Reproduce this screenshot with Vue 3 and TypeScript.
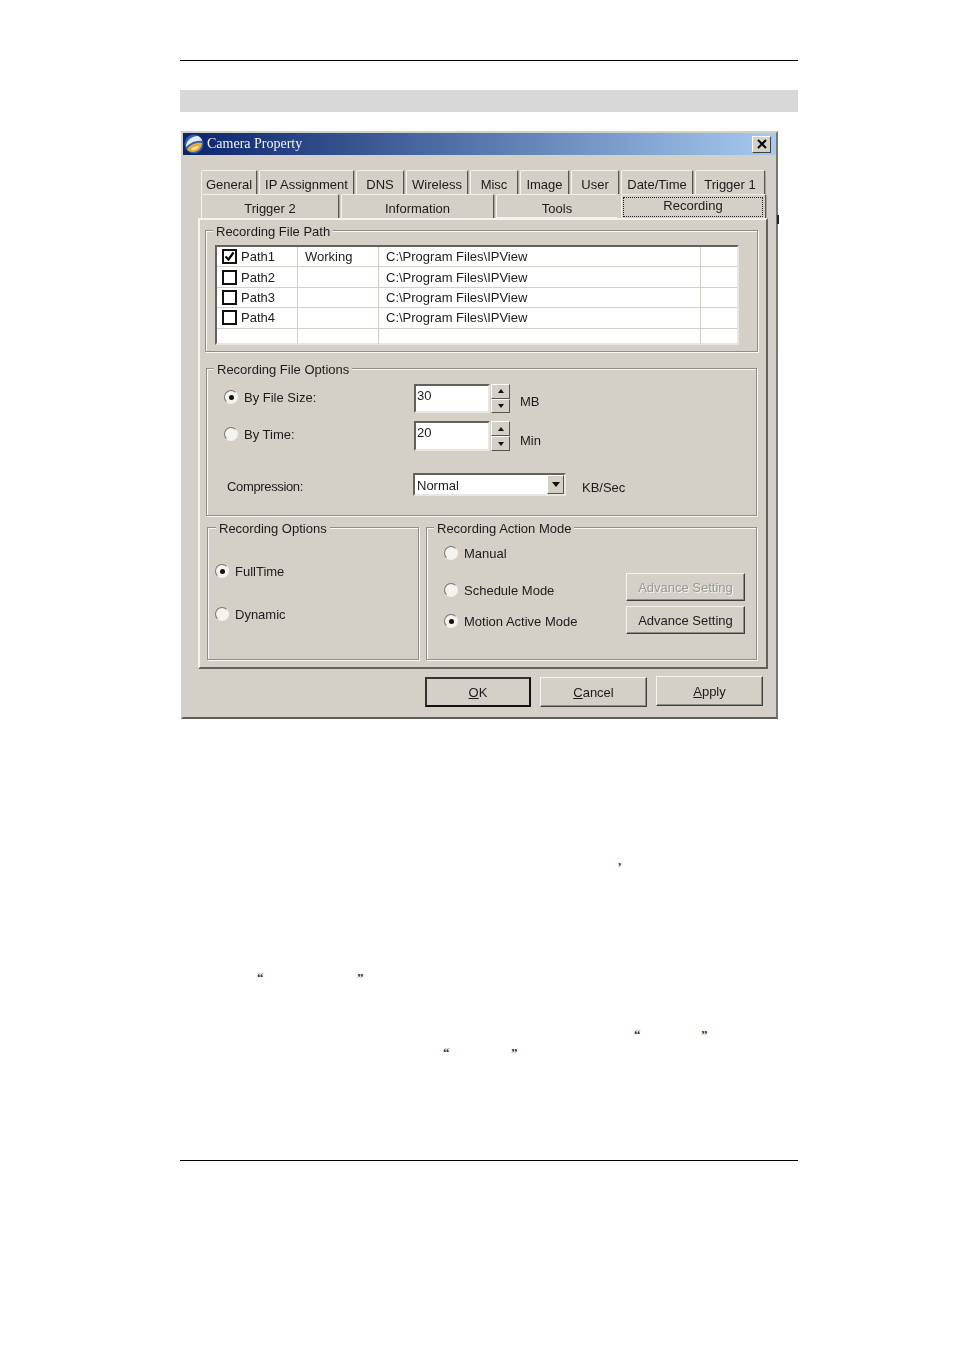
<script setup lang="ts">
const tabsTop = [
  { name: 'General', w: 56 },
  { name: 'IP Assignment', w: 95 },
  { name: 'DNS', w: 48 },
  { name: 'Wireless', w: 62 },
  { name: 'Misc', w: 48 },
  { name: 'Image', w: 49 },
  { name: 'User', w: 48 },
  { name: 'Date/Time', w: 72 },
  { name: 'Trigger 1', w: 70 },
]
const tabsBottom = [
  { name: 'Trigger 2', w: 138 },
  { name: 'Information', w: 153 },
  { name: 'Tools', w: 122 },
]
const paths = [
  { name: 'Path1', on: true, state: 'Working' },
  { name: 'Path2', on: false, state: '' },
  { name: 'Path3', on: false, state: '' },
  { name: 'Path4', on: false, state: '' },
]
// stray punctuation left below the dialog, x is measured from the page rule
const notes = [
  { gap: 130, marks: [{ t: ',', x: 438 }] },
  { gap: 99, marks: [{ t: '“', x: 77 }, { t: '”', x: 177 }] },
  { gap: 39, marks: [{ t: '“', x: 454 }, { t: '”', x: 521 }] },
  { gap: 0, marks: [{ t: '“', x: 263 }, { t: '”', x: 331 }] },
]
</script>

<template>
  <div class="page">
    <div class="rule"></div>
    <div class="shade"></div>

    <div class="dialog">
      <div class="titlebar">
        <svg class="app-icon" width="20" height="20" viewBox="0 0 20 20">
          <circle cx="10" cy="10" r="9.5" fill="#2f5fb0" />
          <path d="M2 13C2 7 7 2 14 2c2 1 4 3 4 5-5-1-11 1-16 6z" fill="#e6ebf2" />
          <path d="M3 15c3-4 9-7 15-6 0 5-4 9-9 9-3 0-5-1-6-3z" fill="#eda93a" />
          <path d="M7 15c2-2 5-3 8-3-1 2-3 4-6 4z" fill="#f8e0b0" />
        </svg>
        <span class="title-text">Camera Property</span>
        <button class="close">
          <svg width="10" height="10" viewBox="0 0 10 10">
            <path d="M1 1l8 8M9 1l-8 8" stroke="#000" stroke-width="2" />
          </svg>
        </button>
      </div>

      <div class="tabs">
        <div class="tab-row">
          <div v-for="t in tabsTop" :key="t.name" class="tab" :style="{ width: t.w + 'px' }">{{ t.name }}</div>
        </div>
        <div class="tab-row">
          <div v-for="t in tabsBottom" :key="t.name" class="tab low" :style="{ width: t.w + 'px' }">{{ t.name }}</div>
          <div class="tab active"><span>Recording</span></div>
        </div>
      </div>

      <div class="panel">
        <section class="group path-group">
          <div class="legend">Recording File Path</div>
          <div class="list">
            <div v-for="p in paths" :key="p.name" class="list-row">
              <div class="cell first">
                <span class="check">
                  <svg v-if="p.on" width="11" height="11" viewBox="0 0 11 11">
                    <path d="M1.5 5.5l3 3 5-7" fill="none" stroke="#000" stroke-width="2.2" />
                  </svg>
                </span>
                <span>{{ p.name }}</span>
              </div>
              <div class="cell">{{ p.state }}</div>
              <div class="cell">C:\Program Files\IPView</div>
              <div class="cell"></div>
            </div>
            <div class="list-row blank">
              <div class="cell first"></div>
              <div class="cell"></div>
              <div class="cell"></div>
              <div class="cell"></div>
            </div>
          </div>
        </section>

        <section class="group file-group">
          <div class="legend">Recording File Options</div>
          <div class="opt-row">
            <label class="radio-line opt-label"><span class="radio on"></span>By File Size:</label>
            <div class="field">30</div>
            <div class="spin">
              <span><i class="up"></i></span>
              <span><i class="down"></i></span>
            </div>
            <span class="unit">MB</span>
          </div>
          <div class="opt-row second">
            <label class="radio-line opt-label"><span class="radio"></span>By Time:</label>
            <div class="field">20</div>
            <div class="spin">
              <span><i class="up"></i></span>
              <span><i class="down"></i></span>
            </div>
            <span class="unit lower">Min</span>
          </div>
          <div class="comp-row">
            <span class="comp-label">Compression:</span>
            <div class="select">
              <span class="select-text">Normal</span>
              <span class="select-btn"><i class="down big"></i></span>
            </div>
            <span class="kb">KB/Sec</span>
          </div>
        </section>

        <div class="bottom-groups">
          <section class="group opts-group">
            <div class="legend">Recording Options</div>
            <label class="radio-line full"><span class="radio on"></span>FullTime</label>
            <label class="radio-line dyn"><span class="radio"></span>Dynamic</label>
          </section>
          <section class="group action-group">
            <div class="legend">Recording Action Mode</div>
            <div class="action-body">
              <div class="action-modes">
                <label class="radio-line"><span class="radio"></span>Manual</label>
                <label class="radio-line sched"><span class="radio"></span>Schedule Mode</label>
                <label class="radio-line motion"><span class="radio on"></span>Motion Active Mode</label>
              </div>
              <div class="action-btns">
                <button class="btn small disabled">Advance Setting</button>
                <button class="btn small">Advance Setting</button>
              </div>
            </div>
          </section>
        </div>
      </div>

      <div class="footer">
        <button class="btn wide default"><u>O</u>K</button>
        <button class="btn wide"><u>C</u>ancel</button>
        <button class="btn wide apply"><u>A</u>pply</button>
      </div>
      <span class="edge-tick"></span>
    </div>

    <div class="notes">
      <div v-for="(n, i) in notes" :key="i" class="note" :style="{ marginTop: n.gap + 'px' }">
        <span v-for="m in n.marks" :key="m.x" class="mark" :style="{ left: m.x + 'px' }">{{ m.t }}</span>
      </div>
    </div>
    <div class="rule"></div>
  </div>
</template>

<style>
html,
body {
  background: #fff;
}
</style>

<style scoped>
.page {
  width: 954px;
  height: 1349px;
  padding: 60px 156px 0 180px;
  box-sizing: border-box;
  overflow: hidden;
  font-family: "Liberation Sans", Arial, sans-serif;
}

.rule {
  height: 1px;
  background: #000;
}

.shade {
  height: 22px;
  margin-top: 29px;
  background: #d8d8d8;
}

.dialog {
  position: relative;
  width: 597px;
  height: 588px;
  margin: 19px 0 0 1px;
  box-sizing: border-box;
  border: 2px solid;
  border-color: #d4d0c8 #77766f #5c5c58 #d4d0c8;
  background: #d4d0c8;
  font-size: 13px;
  color: #1c1c1c;
  filter: blur(0.4px);
}

.titlebar {
  display: flex;
  align-items: center;
  height: 22px;
  background: linear-gradient(90deg, #0a246a, #a6caf0);
}

.app-icon {
  flex: none;
  margin-left: 1px;
}

.title-text {
  margin-left: 3px;
  font-family: "Liberation Serif", serif;
  font-size: 14px;
  color: #f0f2f8;
}

.close {
  display: flex;
  align-items: center;
  justify-content: center;
  width: 19px;
  height: 17px;
  margin-left: auto;
  margin-right: 5px;
  padding: 0;
  border: 1px solid;
  border-color: #fff #404040 #404040 #fff;
  background: #d4d0c8;
}

.tabs {
  margin: 15px 0 0 18px;
}

.tab-row {
  display: flex;
  gap: 2px;
  height: 24px;
}

.tab {
  box-sizing: border-box;
  padding-top: 6px;
  border-top: 1px solid #f0efeb;
  border-left: 1px solid #f4f3f0;
  border-right: 1px solid #55554f;
  border-radius: 2px 2px 0 0;
  box-shadow: 1px 0 #a8a69f;
  text-align: center;
  white-space: nowrap;
}

.tab.low {
  padding-top: 6px;
}

.tab-row:last-child .tab:nth-child(3) {
  border-right-color: #d4d0c8;
  box-shadow: none;
  border-bottom: 1px solid #f4f3f0;
}

.tab.active {
  width: 145px;
  height: 24px;
  margin-left: 1px;
  padding: 2px 2px 0 1px;
}

.tab.active span {
  display: block;
  height: 18px;
  border: 1px dotted #222;
  line-height: 16px;
}

.panel {
  width: 570px;
  height: 451px;
  margin-left: 15px;
  box-sizing: border-box;
  padding: 10px 0 0 5px;
  border: 2px solid;
  border-color: #f4f3f0 #62625c #62625c #f4f3f0;
}

.group {
  box-sizing: border-box;
  border: 1px solid #8f8e89;
  box-shadow: inset 1px 1px #f8f8f6, 1px 1px #f8f8f6;
}

.legend {
  width: fit-content;
  height: 16px;
  margin: -7px 0 -2px 7px;
  padding: 0 3px;
  background: #d4d0c8;
  line-height: 16px;
  white-space: nowrap;
}

.path-group {
  width: 553px;
  height: 122px;
}

.list {
  width: 524px;
  height: 100px;
  margin: 7px 0 0 9px;
  box-sizing: border-box;
  border: 2px solid;
  border-color: #62625c #e8e6e1 #e8e6e1 #62625c;
  background: #fff;
}

.list-row {
  display: grid;
  grid-template-columns: 81px 81px 322px 1fr;
  height: 20.4px;
  box-sizing: border-box;
  border-bottom: 1px solid #d4d0c8;
  line-height: 19px;
}

.list-row.blank {
  height: 15px;
  border-bottom: 0;
}

.cell {
  display: flex;
  align-items: center;
  padding-left: 7px;
  border-right: 1px solid #d4d0c8;
  white-space: nowrap;
}

.cell:last-child {
  border-right: 0;
}

.cell.first {
  padding-left: 5px;
  gap: 4px;
}

.check {
  display: flex;
  align-items: center;
  justify-content: center;
  width: 15px;
  height: 15px;
  box-sizing: border-box;
  border: 2px solid #111;
  background: #fff;
}

.file-group {
  width: 551px;
  height: 148px;
  margin: 16px 0 0 1px;
  padding-left: 17px;
}

.file-group .legend {
  margin-left: -10px;
}

.opt-row {
  display: flex;
  height: 29px;
  margin-top: 8px;
}

.opt-row.second {
  height: 30px;
  margin-top: 8px;
}

.opt-label {
  width: 190px;
  align-self: flex-start;
  gap: 7px;
  margin-top: 3px;
}

.radio-line {
  display: flex;
  align-items: center;
  gap: 6px;
  height: 20px;
  white-space: nowrap;
}

.radio {
  flex: none;
  display: flex;
  align-items: center;
  justify-content: center;
  width: 14px;
  height: 14px;
  box-sizing: border-box;
  border: 1.5px solid;
  border-color: #77766f #f2f1ee #f2f1ee #77766f;
  border-radius: 50%;
  background: #f4f3f0;
}

.radio.on::after {
  content: "";
  width: 5px;
  height: 5px;
  border-radius: 50%;
  background: #111;
}

.field {
  width: 76px;
  box-sizing: border-box;
  padding: 1px 0 0 1px;
  border: 2px solid;
  border-color: #62625c #e8e6e1 #e8e6e1 #62625c;
  background: #fff;
  line-height: 17px;
}

.spin {
  display: flex;
  flex-direction: column;
  width: 19px;
  margin-left: 1px;
}

.spin span {
  flex: 1;
  display: flex;
  align-items: center;
  justify-content: center;
  box-sizing: border-box;
  border: 1px solid;
  border-color: #fff #55554f #55554f #fff;
}

.up,
.down {
  width: 0;
  height: 0;
  border-left: 3px solid transparent;
  border-right: 3px solid transparent;
}

.up {
  border-bottom: 4px solid #111;
}

.down {
  border-top: 4px solid #111;
}

.down.big {
  border-left-width: 4px;
  border-right-width: 4px;
  border-top-width: 5px;
}

.unit {
  margin: 10px 0 0 10px;
}

.unit.lower {
  margin-top: 12px;
}

.comp-row {
  display: flex;
  align-items: center;
  height: 23px;
  margin-top: 22px;
  margin-left: 3px;
}

.comp-label {
  width: 186px;
  padding-top: 4px;
  letter-spacing: -0.35px;
}

.select {
  display: flex;
  width: 153px;
  height: 23px;
  box-sizing: border-box;
  border: 2px solid;
  border-color: #62625c #e8e6e1 #e8e6e1 #62625c;
  background: #fff;
}

.select-text {
  flex: 1;
  padding: 2px 0 0 2px;
  line-height: 18px;
}

.select-btn {
  display: flex;
  align-items: center;
  justify-content: center;
  width: 17px;
  box-sizing: border-box;
  border: 1px solid;
  border-color: #fff #55554f #55554f #fff;
  background: #d4d0c8;
}

.kb {
  margin-left: 16px;
  padding-top: 6px;
}

.bottom-groups {
  display: flex;
  gap: 7px;
  margin: 11px 0 0 2px;
}

.opts-group {
  width: 212px;
  height: 133px;
  padding-left: 7px;
}

.opts-group .legend {
  margin-left: 1px;
}

.full {
  margin-top: 26px;
}

.dyn {
  margin-top: 23px;
}

.action-group {
  width: 331px;
  height: 133px;
}

.action-body {
  display: flex;
  justify-content: space-between;
  padding: 0 11px 0 17px;
}

.action-modes {
  padding-top: 8px;
}

.sched {
  margin-top: 17px;
}

.motion {
  margin-top: 11px;
}

.action-btns {
  display: flex;
  flex-direction: column;
  gap: 5px;
  padding-top: 38px;
}

.btn {
  padding: 0;
  box-sizing: border-box;
  border: 1px solid;
  border-color: #f4f3f0 #404040 #404040 #f4f3f0;
  background: #d4d0c8;
  font: inherit;
  color: inherit;
  box-shadow: inset -1px -1px #8e8d88;
}

.btn.small {
  width: 119px;
  height: 28px;
}

.btn.disabled {
  color: #9a9994;
  text-shadow: 1px 1px #f4f3f0;
}

.footer {
  display: flex;
  gap: 9px;
  margin: 8px 0 0 242px;
}

.btn.wide {
  width: 107px;
  height: 30px;
}

.btn.default {
  width: 106px;
  border: 2px solid;
  border-color: #333 #111 #111 #333;
  box-shadow: none;
}

.btn.apply {
  height: 30px;
  margin-top: -1px;
}

.edge-tick {
  position: absolute;
  top: 82px;
  right: -3px;
  width: 2px;
  height: 9px;
  background: #222;
}

.notes {
  display: flow-root;
  height: 441px;
}

.note {
  position: relative;
  height: 18px;
}

.mark {
  position: absolute;
  top: 3px;
  font-family: "Liberation Serif", serif;
  font-size: 13px;
  font-weight: bold;
  line-height: 18px;
  color: #333;
}
</style>
